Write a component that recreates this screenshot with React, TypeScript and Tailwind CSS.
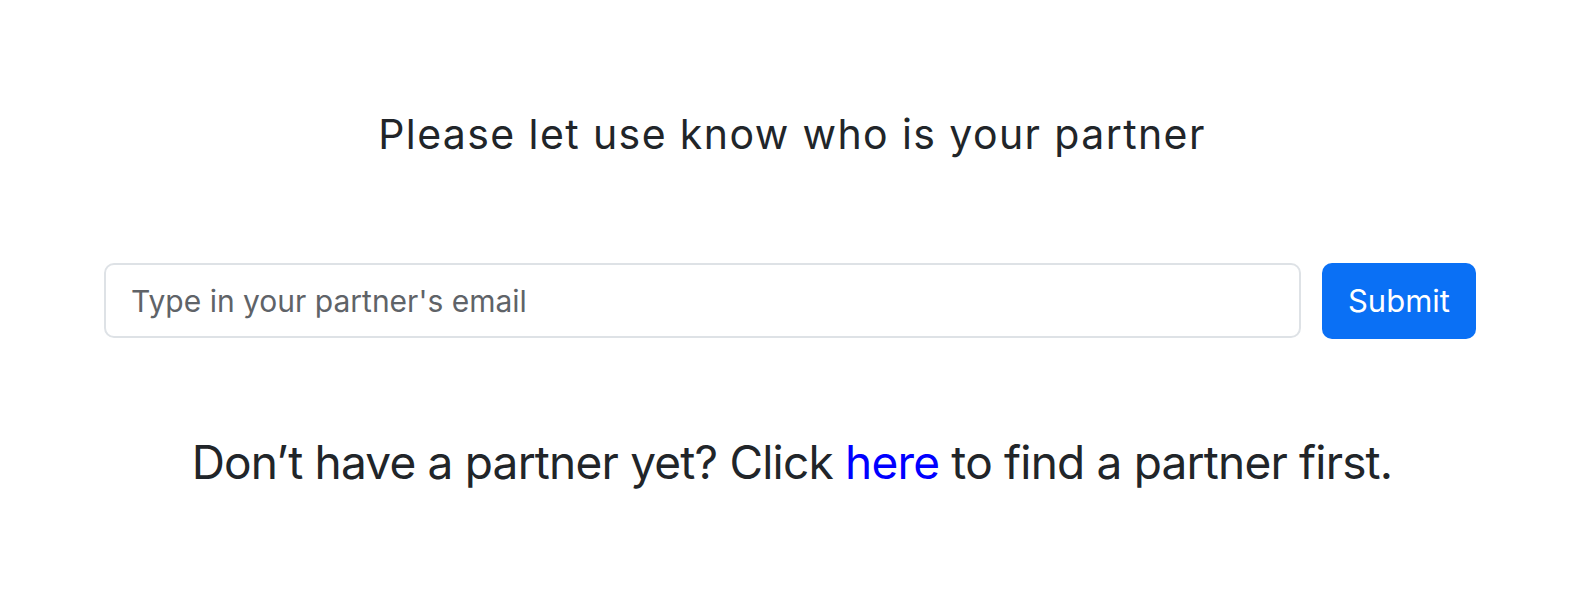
export default function App() {
  return (
    <div className="flex h-[614px] w-full flex-col items-center bg-white font-['Inter',sans-serif] text-[#212529]">
      <h5 className="mt-[110px] text-[41px] leading-[1.2] font-normal tracking-[1.4px]">
        Please let use know who is your partner
      </h5>

      <form className="mt-[104px] flex w-full gap-[21px] pl-[104px] pr-[108px]">
        <input
          type="email"
          placeholder="Type in your partner's email"
          className="h-[75px] flex-1 rounded-[10px] border-2 border-[#dee2e6] bg-white px-[25px] text-[30px] text-[#212529] outline-none placeholder:text-[#5f6368]"
        />
        <button
          type="button"
          className="h-[76px] w-[154px] rounded-[10px] bg-[#0a70f5] text-[31px] text-white"
        >
          Submit
        </button>
      </form>

      <h4 className="mt-[96px] text-[46px] leading-[1.2] font-normal tracking-[-0.8px]">
        Don’t have a partner yet? Click{" "}
        <a href="#" className="text-[#0000ff]">
          here
        </a>{" "}
        to find a partner first.
      </h4>
    </div>
  );
}
